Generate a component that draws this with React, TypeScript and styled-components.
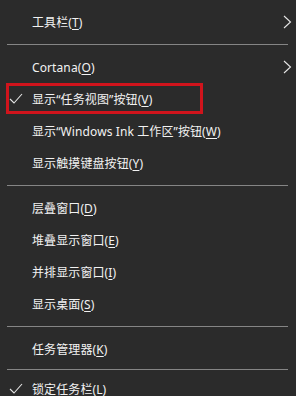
import React from 'react';
import styled, { createGlobalStyle } from 'styled-components';

const GlobalStyle = createGlobalStyle`
  html, body {
    margin: 0;
    padding: 0;
    background: #2b2b2b;
  }
`;

const Menu = styled.div`
  width: 296px;
  height: 396px;
  overflow: hidden;
  box-sizing: border-box;
  padding-top: 6px;
  background: #2b2b2b;
  font-family: 'Noto Sans', 'Noto Sans CJK SC', sans-serif;
  font-size: 12px;
  color: #f2f2f2;
  display: flex;
  flex-direction: column;
`;

const Item = styled.div`
  position: relative;
  height: 32px;
  display: flex;
  align-items: center;
  padding-left: 32px;
  padding-right: 4px;
  flex-shrink: 0;
`;

const Label = styled.span`
  flex: 1;
  white-space: nowrap;
  letter-spacing: 0.1px;

  u {
    text-decoration-thickness: 1px;
    text-underline-offset: 2px;
  }
`;

const CheckMark = styled.svg`
  position: absolute;
  left: 9px;
  top: 50%;
  width: 14px;
  height: 11px;
  margin-top: -6px;
`;

const Chevron = styled.svg`
  width: 9px;
  height: 14px;
`;

const Highlight = styled.div`
  position: absolute;
  left: 6px;
  top: 0;
  width: 197px;
  height: 31px;
  border: 3px solid #d0141c;
  box-sizing: border-box;
  pointer-events: none;
`;

const Separator = styled.div<{ $compact?: boolean }>`
  flex-shrink: 0;
  padding: ${(p) => (p.$compact ? '4px 8px 3px 7px' : '6px 8px 6px 7px')};

  &::after {
    content: '';
    display: block;
    height: 1px;
    background: #858585;
  }
`;

const Check = () => (
  <CheckMark viewBox="0 0 14 11">
    <path d="M1 6 L5 10 L13 1" fill="none" stroke="#e6e6e6" strokeWidth="1.1" />
  </CheckMark>
);

const Arrow = () => (
  <Chevron viewBox="0 0 9 14">
    <path d="M1 1 L7.5 7 L1 13" fill="none" stroke="#e6e6e6" strokeWidth="1.1" />
  </Chevron>
);

interface RowProps {
  text: string;
  keyChar: string;
  checked?: boolean;
  submenu?: boolean;
  highlight?: boolean;
}

const Row: React.FC<RowProps> = ({ text, keyChar, checked, submenu, highlight }) => (
  <Item>
    {checked && <Check />}
    {highlight && <Highlight />}
    <Label>
      {text}(<u>{keyChar}</u>)
    </Label>
    {submenu && <Arrow />}
  </Item>
);

const App: React.FC = () => {
  return (
    <>
      <GlobalStyle />
      <Menu>
        <Row text="工具栏" keyChar="T" submenu />
        <Separator />
        <Row text="Cortana" keyChar="O" submenu />
        <Row text="显示“任务视图”按钮" keyChar="V" checked highlight />
        <Row text="显示“Windows Ink 工作区”按钮" keyChar="W" />
        <Row text="显示触摸键盘按钮" keyChar="Y" />
        <Separator />
        <Row text="层叠窗口" keyChar="D" />
        <Row text="堆叠显示窗口" keyChar="E" />
        <Row text="并排显示窗口" keyChar="I" />
        <Row text="显示桌面" keyChar="S" />
        <Separator />
        <Row text="任务管理器" keyChar="K" />
        <Separator $compact />
        <Row text="锁定任务栏" keyChar="L" checked />
      </Menu>
    </>
  );
};

export default App;
